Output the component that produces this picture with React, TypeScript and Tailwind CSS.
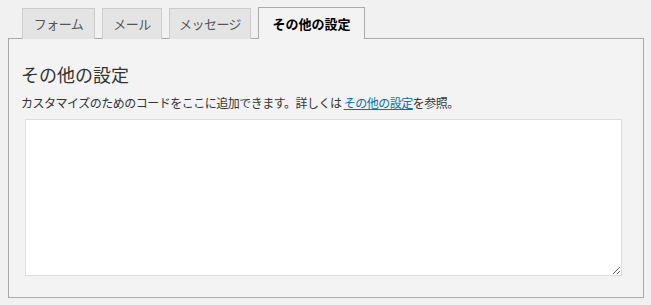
import React from "react";

const tabs = [
  { label: "フォーム", w: "w-[73px]" },
  { label: "メール", w: "w-[60px]" },
  { label: "メッセージ", w: "w-[82px]" },
  { label: "その他の設定", w: "w-[107px]" },
];

export default function App() {
  const active = 3;
  return (
    <div
      className="w-[651px] h-[305px] bg-[#f1f1f1] pt-[7px] pl-[8px]"
      style={{ fontFamily: '"Noto Sans CJK JP", "Noto Sans", sans-serif' }}
    >
      {/* tabs */}
      <div className="flex items-end pl-[14px] gap-[7px] relative z-10">
        {tabs.map((t, i) =>
          i === active ? (
            <div
              key={t.label}
              className={`${t.w} h-[32px] flex items-center justify-center bg-[#f3f3f3] border border-b-0 border-[#aaaaaa] text-[13px] font-bold text-black`}
            >
              {t.label}
            </div>
          ) : (
            <div
              key={t.label}
              className={`${t.w} h-[31px] flex items-center justify-center bg-[#e4e4e4] border border-b-0 border-[#cccccc] text-[13px] tracking-[-0.5px] text-[#555555]`}
            >
              {t.label}
            </div>
          )
        )}
      </div>

      {/* panel */}
      <div className="w-[636px] h-[260px] -mt-px bg-[#f3f3f3] border border-[#aaaaaa] pl-[12px] pt-[23px]">
        <h2 className="text-[18px] leading-[24px] text-[#333333] font-normal">その他の設定</h2>
        <p className="mt-[9px] text-[12px] leading-[16px] tracking-[-0.5px] text-[#333333]">
          カスタマイズのためのコードをここに追加できます。詳しくは{" "}
          <a href="#" className="text-[#0073aa] underline">
            その他の設定
          </a>
          を参照。
        </p>
        <textarea className="block mt-[8px] ml-[4px] w-[597px] h-[157px] bg-white border border-[#dddddd] outline-none" />
      </div>
    </div>
  );
}
